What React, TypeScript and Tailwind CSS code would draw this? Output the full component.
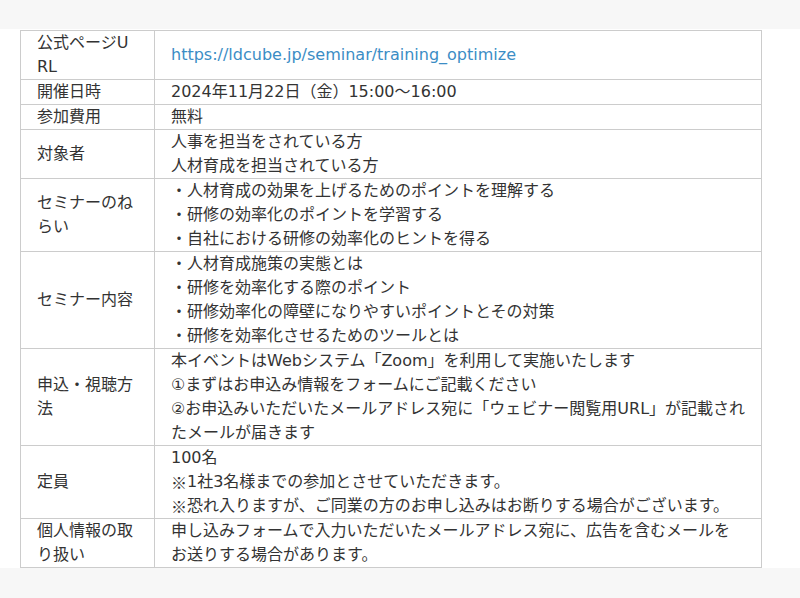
import React from 'react';

type Row = { label: string[]; lines: React.ReactNode[] };

// ※ takes the full-width CJK glyph it has in the reference
const Kome = () => (
  <span className="inline-block w-4 align-top" style={{ fontFamily: '"Noto Sans CJK JP", sans-serif' }}>
    ※
  </span>
);

const rows: Row[] = [
  {
    label: ['公式ページU', 'RL'],
    lines: [
      <a key="u" href="#" className="text-[#3b8dc5]">
        https://ldcube.jp/seminar/training_optimize
      </a>,
    ],
  },
  { label: ['開催日時'], lines: ['2024年11月22日（金）15:00〜16:00'] },
  { label: ['参加費用'], lines: ['無料'] },
  { label: ['対象者'], lines: ['人事を担当をされている方', '人材育成を担当されている方'] },
  {
    label: ['セミナーのね', 'らい'],
    lines: [
      '・人材育成の効果を上げるためのポイントを理解する',
      '・研修の効率化のポイントを学習する',
      '・自社における研修の効率化のヒントを得る',
    ],
  },
  {
    label: ['セミナー内容'],
    lines: [
      '・人材育成施策の実態とは',
      '・研修を効率化する際のポイント',
      '・研修効率化の障壁になりやすいポイントとその対策',
      '・研修を効率化させるためのツールとは',
    ],
  },
  {
    label: ['申込・視聴方', '法'],
    lines: [
      '本イベントはWebシステム「Zoom」を利用して実施いたします',
      '①まずはお申込み情報をフォームにご記載ください',
      '②お申込みいただいたメールアドレス宛に「ウェビナー閲覧用URL」が記載され',
      'たメールが届きます',
    ],
  },
  {
    label: ['定員'],
    lines: [
      '100名',
      <>
        <Kome />1社3名様までの参加とさせていただきます。
      </>,
      <>
        <Kome />恐れ入りますが、ご同業の方のお申し込みはお断りする場合がございます。
      </>,
    ],
  },
  {
    label: ['個人情報の取', 'り扱い'],
    lines: ['申し込みフォームで入力いただいたメールアドレス宛に、広告を含むメールを', 'お送りする場合があります。'],
  },
];

export default function App() {
  return (
    <div
      className="min-h-[598px] bg-[#f7f7f7] text-[16px] leading-6 text-[#333]"
      style={{ fontFamily: '"DejaVu Sans", "Noto Sans CJK JP", sans-serif' }}
    >
      <div className="h-[29px]" />
      <div className="bg-white pt-px pl-5 pr-[38px]">
        <table className="w-full table-fixed border-collapse border border-[#cccccc]">
          <tbody>
            {rows.map((r) => (
              <tr key={r.label.join('')}>
                <th className="w-[134px] border border-[#cccccc] px-4 py-0 text-left align-middle font-normal">
                  {r.label.map((l, i) => (
                    <div key={i} className="whitespace-nowrap">
                      {l}
                    </div>
                  ))}
                </th>
                <td className="border border-[#cccccc] py-0 pl-4 pr-2 align-middle">
                  {r.lines.map((l, i) => (
                    <div key={i} className="whitespace-nowrap">
                      {l}
                    </div>
                  ))}
                </td>
              </tr>
            ))}
          </tbody>
        </table>
      </div>
    </div>
  );
}
